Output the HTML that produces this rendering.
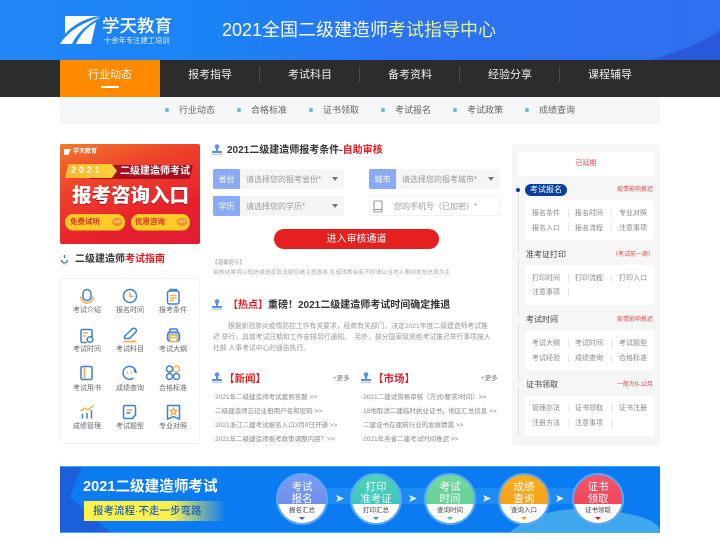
<!DOCTYPE html>
<html lang="zh-CN"><head><meta charset="utf-8"><title>2021全国二级建造师考试指导中心</title>
<style>
*{margin:0;padding:0;box-sizing:border-box}
html,body{width:720px;height:540px;overflow:hidden;background:#fff}
body{position:relative;font-family:"Liberation Sans","Noto Sans CJK SC",sans-serif;filter:blur(.3px)}
.a{position:absolute}
.t{position:absolute;white-space:nowrap;line-height:0}
.c{transform:translateX(-50%)}
.r{transform:translateX(-100%)}
b{font-weight:700}
.nav{color:#eee;font-size:11px;margin-top:1px}
.sub{color:#666;font-size:9px}
.dot{position:absolute;width:4px;height:4px;border-radius:50%;background:#6fb3de}
.sep{position:absolute;width:1px;height:16px;top:66px;background:#4a4a4a}
.lab{font-size:7px;color:#666;margin-top:1px}
.lbl{position:absolute;width:27px;height:20px;background:#8aaaf8;color:#fff;font-size:8px;line-height:21px;text-align:center;border-radius:2px 0 0 2px}
.inp{position:absolute;width:104px;height:20px;background:#f5f5f5;color:#999;font-size:8px;line-height:21px;padding-left:6px;border-radius:0 2px 2px 0}
.inp i{position:absolute;right:6px;top:8px;border:3.5px solid transparent;border-top:4px solid #777;border-bottom:0}
.li{font-size:6.5px;color:#888;margin-top:1px}
.box{position:absolute;left:525px;width:129px;height:40px;background:#fff;border-radius:3px}
.it{font-size:7px;color:#888;margin-top:1px}
.vs{position:absolute;width:1px;height:8px;background:#e6e6e6}
.h3{font-size:8px;color:#444;left:526px}
.rd{font-size:6px;color:#e8474f;left:653px}
.nd{position:absolute;left:516px;width:4px;height:4px;border-radius:50%;background:#fff}
.ci{position:absolute;top:473px;width:52px;height:52px;border-radius:50%;overflow:hidden;border:2px solid #5aa8f6}
.ci u{position:absolute;left:0;right:0;bottom:0;height:19px;background:#fff;display:block}
.ci span{position:absolute;left:0;right:0;text-align:center;color:#fff;font-size:10.5px;line-height:12px;top:6px}
.ci em{position:absolute;left:0;right:0;text-align:center;color:#444;font-size:6.5px;font-style:normal;line-height:8px;bottom:8.5px}
.ci i{position:absolute;left:21px;bottom:3px;border:3px solid transparent;border-top:3.5px solid #333;border-bottom:0}
.ar{position:absolute;top:495px;width:8px;height:7px;background:#e8f2ff;clip-path:polygon(0 0,100% 50%,0 100%,25% 50%)}
.user{position:absolute;width:10px;height:11px}
</style></head><body>

<!-- header -->
<div class="a" style="left:0;top:0;width:720px;height:60px;background:linear-gradient(90deg,#2186f5 0,#1b83f6 30%,#2b72f2 55%,#2f6ff0 100%);overflow:hidden">
<svg class="a" style="left:620px;top:0" width="100" height="60" viewBox="0 0 100 60"><path fill="#2a58dc" d="M30 60C55 53 80 44 100 30V60Z"/></svg>
<svg class="a" style="left:60px;top:16px" width="42" height="29" viewBox="0 0 42 29"><path fill="#fff" d="M5 0H40C27 2 15 7 5 18ZM0 28C7 17 20 7 41 1 27 8 17 17 12 28ZM16 28C20 19 27 11 36 6L31 28Z"/></svg>
<div class="t" style="left:102px;top:26px;font-size:17.5px;font-weight:500;color:#fff">学天教育</div>
<div class="t" style="left:104px;top:41px;font-size:7.3px;color:#e4f0ff">十余年专注建工培训</div>
<div class="t" style="left:222px;top:30px;font-size:18px;color:#fff">2021全国二级建造师<span style="color:#e2f48a">考试指导中心</span></div>
</div>

<!-- nav -->
<div class="a" style="left:0;top:60px;width:720px;height:37px;background:#2c2c2c"></div>
<div class="a" style="left:60px;top:60px;width:100px;height:37px;background:#ff8a00"></div>
<div class="a" style="left:101px;top:86px;width:18px;height:2px;background:#fff"></div>
<div class="t nav c" style="left:110px;top:74px;color:#fff">行业动态</div>
<div class="t nav c" style="left:210px;top:74px">报考指导</div>
<div class="t nav c" style="left:310px;top:74px">考试科目</div>
<div class="t nav c" style="left:410px;top:74px">备考资料</div>
<div class="t nav c" style="left:510px;top:74px">经验分享</div>
<div class="t nav c" style="left:610px;top:74px">课程辅导</div>
<div class="sep" style="left:259px"></div><div class="sep" style="left:359px"></div><div class="sep" style="left:459px"></div><div class="sep" style="left:559px"></div>

<!-- subnav -->
<div class="a" style="left:60px;top:97px;width:600px;height:27px;background:#f5f6f7"></div>
<div class="dot" style="left:165px;top:108px"></div><div class="t sub" style="left:179px;top:110px">行业动态</div>
<div class="dot" style="left:237px;top:108px"></div><div class="t sub" style="left:251px;top:110px">合格标准</div>
<div class="dot" style="left:309px;top:108px"></div><div class="t sub" style="left:323px;top:110px">证书领取</div>
<div class="dot" style="left:381px;top:108px"></div><div class="t sub" style="left:395px;top:110px">考试报名</div>
<div class="dot" style="left:453px;top:108px"></div><div class="t sub" style="left:467px;top:110px">考试政策</div>
<div class="dot" style="left:525px;top:108px"></div><div class="t sub" style="left:539px;top:110px">成绩查询</div>

<!-- red banner -->
<div class="a" style="left:60px;top:144px;width:140px;height:100px;border-radius:2px;overflow:hidden;background:linear-gradient(160deg,#f27a2a 0,#ee452b 30%,#e8202c 70%,#e01b35 100%)">
<div class="a" style="left:4px;top:5px;width:7px;height:6px;background:#fff;clip-path:polygon(0 0,100% 0,60% 100%,0 100%)"></div>
<div class="t" style="left:13px;top:8px;font-size:6px;color:#fff;font-weight:700">学天教育</div>
<div class="a" style="left:30px;top:21px;width:103px;height:14px;background:#a9101f;clip-path:polygon(0 0,100% 0,97% 100%,0 100%)"></div>
<div class="a" style="left:5px;top:20px;width:52px;height:14px;background:linear-gradient(90deg,#ffb52e,#ffd23c);clip-path:polygon(6% 0,90% 0,100% 50%,90% 100%,0 100%)"></div>
<div class="t" style="left:11px;top:27px;font-size:9.5px;letter-spacing:2.5px;color:#fff;font-weight:700">2021</div>
<div class="t" style="left:60px;top:28px;font-size:10px;color:#fff;font-weight:700">二级建造师考试</div>
<div class="t" style="left:12px;top:52px;font-size:19.5px;color:#fff;font-weight:900;text-shadow:0 1px 0 #a9101f">报考咨询入口</div>
<div class="a" style="left:5px;top:70px;width:60px;height:16px;border-radius:8px;background:#ffc928;box-shadow:0 1px 0 #d8861a"></div>
<div class="a" style="left:71px;top:70px;width:59px;height:16px;border-radius:8px;background:#ffc928;box-shadow:0 1px 0 #d8861a"></div>
<div class="t" style="left:10px;top:78px;font-size:7.5px;color:#d8331f;font-weight:700">免费试听</div>
<div class="t" style="left:75px;top:78px;font-size:7.5px;color:#d8331f;font-weight:700">优惠咨询</div>
<div class="a" style="left:52px;top:74px;width:10px;height:8px;border-radius:4px;background:#f3931f;color:#fff;font-size:4.5px;line-height:8px;text-align:center">GO</div>
<div class="a" style="left:117px;top:74px;width:10px;height:8px;border-radius:4px;background:#f3931f;color:#fff;font-size:4.5px;line-height:8px;text-align:center">GO</div>
</div>

<!-- guide title -->
<svg class="a" style="left:60px;top:254px" width="9" height="11" viewBox="0 0 9 11"><path fill="none" stroke="#3d86d9" stroke-width="1.400" d="M4.500 1 4.500 4M1.500 6A3 3 0 1 0 7.500 6"/><path fill="#f0b34a" d="M3 9h3v1.500H3z"/></svg>
<div class="t" style="left:75px;top:259.500px;font-size:10px;font-weight:700;color:#333">二级建造师<span style="color:#e21b23">考试指南</span></div>

<!-- icon grid -->
<div class="a" style="left:60px;top:278px;width:140px;height:166px;border:1px solid #f3f3f3"></div>
<svg class="a" style="left:60px;top:278px" width="140" height="166" viewBox="60 278 140 166" fill="none" stroke-width="1.500" stroke="#3d7fd0">
<!-- mic -->
<rect x="83" y="289.500" width="8" height="11" rx="4"/><path stroke="#f0b34a" stroke-width="1.700" d="M80.500 296.500c1 4.500 3.500 6.500 6.500 6.500s5.500-2 6.500-6.500"/>
<!-- clock -->
<circle cx="130" cy="296" r="6.500"/><path stroke="#e9a53a" d="M130 292.500V296.500H133.500"/>
<!-- doc -->
<rect x="167.500" y="291" width="11.500" height="13" rx="2"/><path stroke="#f0b34a" d="M170 295.500h6.500M170 298h6.500M170 300.500h4"/><path d="M170 291v-1.500h6.500v1.500"/>
<!-- exam time -->
<path d="M92 338v-7a1.500 1.500 0 0 0-1.500-1.500h-8a1.500 1.500 0 0 0-1.500 1.500v10a1.500 1.500 0 0 0 1.500 1.500H87"/><path stroke="#f0b34a" d="M83 333h5M83 336h3"/><circle cx="90" cy="339.500" r="2.800"/>
<!-- pencil -->
<path d="M124.500 336.500l7.500-7.500c1-1 2.700-1 3.700 0s.8 2.200 0 3.200l-6.200 6.300h-5z"/><path stroke="#f0b34a" stroke-width="1.800" d="M123.500 341.500h13"/>
<!-- printer -->
<rect x="167.500" y="332" width="12" height="9.500" rx="3" fill="#a6c7ef"/><path d="M169.500 332v-1.500a1.500 1.500 0 0 1 1.500-1.500h5a1.500 1.500 0 0 1 1.500 1.500V332"/><rect x="170" y="335" width="7" height="6.500" fill="#fff" stroke="#f0b34a"/><path stroke="#f0b34a" d="M171 337.500h5"/>
<!-- book -->
<rect x="81" y="366.500" width="11" height="13" rx="1.500"/><path stroke="#f0b34a" stroke-width="1.800" d="M84.500 367v12"/>
<!-- chat -->
<path d="M136 373a6.500 6.500 0 1 0-2.500 5"/><path d="M134 370l2 3"/><path stroke="#f0b34a" stroke-width="1.900" d="M126.500 372.500h1.400M131 372.500h1.400"/>
<!-- four circles -->
<circle cx="169.500" cy="369" r="3"/><circle cx="176.500" cy="369" r="3" stroke="#f0b34a"/><circle cx="169.500" cy="376.500" r="3"/><circle cx="176.500" cy="376.500" r="3"/>
<!-- chart -->
<path stroke="#f0b34a" d="M80.500 411l4.500-3 3 2 5.500-4.500"/><path d="M82.500 418.500v-4.500M87 418.500v-5.500M91.500 418.500v-8.500"/>
<!-- question doc -->
<path d="M125 405.500h9a1.500 1.500 0 0 1 1.500 1.500V415l-3 3.500h-7.500a1.500 1.500 0 0 1-1.500-1.500v-10A1.500 1.500 0 0 1 125 405.500z"/><path stroke="#f0b34a" stroke-width="1.600" d="M126.500 410h6"/><path d="M126.500 413h4"/>
<!-- badge -->
<path d="M167.500 405.500h12v13.500l-6-2.300-6 2.300z"/><path stroke="#f0b34a" d="M173.500 408l1 2.300 2.300.2-1.700 1.600.5 2.400-2.100-1.200-2.100 1.200.5-2.400-1.700-1.600 2.300-.2z"/>
</svg>
<div class="t lab c" style="left:87px;top:310px">考试介绍</div><div class="t lab c" style="left:130px;top:310px">报名时间</div><div class="t lab c" style="left:173px;top:310px">报考条件</div>
<div class="t lab c" style="left:87px;top:349px">考试时间</div><div class="t lab c" style="left:130px;top:349px">考试科目</div><div class="t lab c" style="left:173px;top:349px">考试大纲</div>
<div class="t lab c" style="left:87px;top:387.500px">考试用书</div><div class="t lab c" style="left:130px;top:387.500px">成绩查询</div><div class="t lab c" style="left:173px;top:387.500px">合格标准</div>
<div class="t lab c" style="left:87px;top:426px">成绩管理</div><div class="t lab c" style="left:130px;top:426px">考试题型</div><div class="t lab c" style="left:173px;top:426px">专业对照</div>

<!-- form -->
<svg class="user" style="left:212px;top:144px" viewBox="0 0 10 11"><circle cx="5" cy="2.500" r="2.300" fill="#5b8ff0"/><path fill="#5b8ff0" d="M4 4h2v3h4v2H0V7h4z"/><path fill="#b3c9f5" d="M0 9.700h10V11H0z"/></svg>
<div class="t" style="left:227px;top:151px;font-size:10px;font-weight:700;color:#333">2021二级建造师报考条件-<span style="color:#e21b23">自助审核</span></div>
<div class="lbl" style="left:213px;top:169px">省份</div><div class="inp" style="left:240px;top:169px">请选择您的报考省份*<i></i></div>
<div class="lbl" style="left:369px;top:169px">城市</div><div class="inp" style="left:396px;top:169px">请选择您的报考城市*<i></i></div>
<div class="lbl" style="left:213px;top:196px">学历</div><div class="inp" style="left:240px;top:196px">请选择您的学历*<i></i></div>
<div class="a" style="left:369px;top:196px;width:131px;height:20px;border:1px solid #f1f1f1;border-radius:2px;font-size:8px;color:#999;line-height:19px;padding-left:24px">您的手机号（已加密）*</div>
<svg class="a" style="left:373px;top:200px" width="10" height="13" viewBox="0 0 10 13" fill="none" stroke="#999" stroke-width="1.100"><rect x="1" y="1" width="8" height="11" rx="1"/><path d="M1 9.500h8"/></svg>
<div class="a" style="left:274px;top:229px;width:165px;height:20px;border-radius:10px;background:#e61f1f;color:#fff;font-size:10px;line-height:21px;text-align:center">进入审核通道</div>
<div class="t" style="left:212px;top:262.500px;font-size:5.500px;color:#999">【温馨提示】</div>
<div class="t" style="left:213px;top:273px;font-size:5.750px;color:#aaa">审核结果将以短信或语音发送给您请注意查收,各省政策会有不同请以当地人事网发布信息为主</div>

<!-- hot -->
<svg class="user" style="left:212px;top:299px" viewBox="0 0 10 11"><circle cx="5" cy="2.500" r="2.300" fill="#5b8ff0"/><path fill="#5b8ff0" d="M4 4h2v3h4v2H0V7h4z"/><path fill="#b3c9f5" d="M0 9.700h10V11H0z"/></svg>
<div class="t" style="left:228px;top:306px;font-size:10px;font-weight:700;color:#333"><span style="color:#e21b23">【热点】</span>重磅！2021二级建造师考试时间确定推退</div>
<div class="t" style="left:228px;top:327px;font-size:6.800px;color:#999">根据新冠肺炎疫情防控工作有关要求，经商有关部门，决定2021年度二级建造师考试推</div>
<div class="t" style="left:213px;top:338px;font-size:6.800px;color:#999">迟 举行，具体考试日期和工作安排另行通知。 &nbsp;另外，部分国家级资格考试推迟举行事项按人</div>
<div class="t" style="left:213px;top:349px;font-size:6.800px;color:#999">社部 人事考试中心的通告执行。</div>

<!-- news -->
<svg class="user" style="left:212px;top:372px" viewBox="0 0 10 11"><circle cx="5" cy="2.500" r="2.300" fill="#5b8ff0"/><path fill="#5b8ff0" d="M4 4h2v3h4v2H0V7h4z"/><path fill="#b3c9f5" d="M0 9.700h10V11H0z"/></svg>
<div class="t" style="left:224px;top:378.500px;font-size:10.500px;font-weight:700;color:#d8232a">【新闻】</div>
<div class="t" style="left:333px;top:379px;font-size:6.500px;color:#777">+更多</div>
<svg class="user" style="left:361px;top:372px" viewBox="0 0 10 11"><circle cx="5" cy="2.500" r="2.300" fill="#5b8ff0"/><path fill="#5b8ff0" d="M4 4h2v3h4v2H0V7h4z"/><path fill="#b3c9f5" d="M0 9.700h10V11H0z"/></svg>
<div class="t" style="left:373px;top:378.500px;font-size:10.500px;font-weight:700;color:#d8232a">【市场】</div>
<div class="t" style="left:481px;top:379px;font-size:6.500px;color:#777">+更多</div>
<div class="t li" style="left:213px;top:397px">·2021年二级建造师考试案例答题 &gt;&gt;</div>
<div class="t li" style="left:213px;top:411px">·二级建造师忘记注册用户名和密码 &gt;&gt;</div>
<div class="t li" style="left:213px;top:425px">·2021浙江二建考试报名入口3月9日开通 &gt;&gt;</div>
<div class="t li" style="left:213px;top:439px">·2021年二级建造师报考政策调整内容？&gt;&gt;</div>
<div class="t li" style="left:361px;top:397px">·2021二建试资格审核（方式/要求/时间）&gt;&gt;</div>
<div class="t li" style="left:361px;top:411px">·18地取消二建临时执业证书，地区汇总信息 &gt;&gt;</div>
<div class="t li" style="left:361px;top:425px">·二建证书在建筑行业的发展情景 &gt;&gt;</div>
<div class="t li" style="left:361px;top:439px">·2021年各省二建考试时间推迟 &gt;&gt;</div>

<!-- right panel -->
<div class="a" style="left:512px;top:144px;width:148px;height:302px;background:#f6f6f6;border-radius:2px"></div>
<div class="a" style="left:518px;top:152px;width:136px;height:24px;background:#fff;border-radius:2px"></div>
<div class="t c" style="left:586px;top:164px;font-size:7px;color:#e8474f">已延期</div>
<div class="a" style="left:517.500px;top:186px;width:1px;height:250px;background:#e3e3e3"></div>
<div class="a" style="left:516px;top:188px;width:4px;height:4px;border-radius:50%;background:#0a3f9a"></div>
<div class="a" style="left:525px;top:184px;width:42px;height:12px;border-radius:6px;background:#0a3f9a;color:#fff;font-size:8px;line-height:12px;text-align:center">考试报名</div>
<div class="t rd r" style="top:190px">疫情影响推迟</div>
<div class="box" style="top:200px"></div>
<div class="t it" style="left:532px;top:213px">报名条件</div><div class="t it" style="left:575px;top:213px">报名时间</div><div class="t it" style="left:619px;top:213px">专业对照</div>
<div class="t it" style="left:532px;top:227.500px">报名入口</div><div class="t it" style="left:575px;top:227.500px">报名流程</div><div class="t it" style="left:619px;top:227.500px">注意事项</div>
<div class="vs" style="left:568px;top:209px"></div><div class="vs" style="left:611px;top:209px"></div><div class="vs" style="left:568px;top:223px"></div><div class="vs" style="left:611px;top:223px"></div>

<div class="nd" style="top:253px"></div>
<div class="t h3" style="top:255px">准考证打印</div>
<div class="t rd r" style="top:255px;left:654px">（考试前一周）</div>
<div class="box" style="top:265px"></div>
<div class="t it" style="left:532px;top:277.500px">打印时间</div><div class="t it" style="left:575px;top:277.500px">打印流程</div><div class="t it" style="left:619px;top:277.500px">打印入口</div>
<div class="t it" style="left:532px;top:292px">注意事项</div>
<div class="vs" style="left:568px;top:274px"></div><div class="vs" style="left:611px;top:274px"></div><div class="vs" style="left:568px;top:288px"></div>

<div class="nd" style="top:318px"></div>
<div class="t h3" style="top:320px">考试时间</div>
<div class="t rd r" style="top:320px">疫情影响推迟</div>
<div class="box" style="top:330px"></div>
<div class="t it" style="left:532px;top:342.500px">考试大纲</div><div class="t it" style="left:575px;top:342.500px">考试时间</div><div class="t it" style="left:619px;top:342.500px">考试题型</div>
<div class="t it" style="left:532px;top:357.500px">考试经验</div><div class="t it" style="left:575px;top:357.500px">成绩查询</div><div class="t it" style="left:619px;top:357.500px">合格标准</div>
<div class="vs" style="left:568px;top:339px"></div><div class="vs" style="left:611px;top:339px"></div><div class="vs" style="left:568px;top:354px"></div><div class="vs" style="left:611px;top:354px"></div>

<div class="nd" style="top:383px"></div>
<div class="t h3" style="top:385px">证书领取</div>
<div class="t rd r" style="top:385px">一般为9-12月</div>
<div class="box" style="top:396px"></div>
<div class="t it" style="left:532px;top:408px">管理办法</div><div class="t it" style="left:575px;top:408px">证书领取</div><div class="t it" style="left:619px;top:408px">证书注册</div>
<div class="t it" style="left:532px;top:423px">注册方法</div><div class="t it" style="left:575px;top:423px">注意事项</div>
<div class="vs" style="left:568px;top:404px"></div><div class="vs" style="left:611px;top:404px"></div><div class="vs" style="left:568px;top:419px"></div><div class="vs" style="left:611px;top:419px"></div>

<!-- bottom banner -->
<div class="a" style="left:60px;top:466px;width:600px;height:67px;overflow:hidden;background:#0b7bf2;border-top:1px solid #4aa6f7;border-bottom:1px solid #4aa6f7">
<svg class="a" style="left:0;top:0" width="600" height="65" viewBox="0 0 600 65">
<path fill="#1a60dc" d="M0 0H22L10 30 50 65H0Z"/>
<path fill="#3fa7ee" d="M450 65C470 48 500 40 530 42S600 50 600 65Z"/>
<path fill="#1c8cf4" d="M240 21H540V37H240Z"/>
</svg>
</div>
<div class="t" style="left:83px;top:487px;font-size:14.600px;font-weight:700;color:#fff">2021二级建造师考试</div>
<div class="a" style="left:84px;top:501px;width:142px;height:20px;background:linear-gradient(90deg,#fff34a 0,#f9f04e 62%,rgba(255,240,80,0) 100%)"></div>
<div class="t" style="left:93px;top:511px;font-size:10.500px;font-weight:500;color:#1c5fb8">报考流程·不走一步弯路</div>

<div class="ci" style="left:276px;background:linear-gradient(#7a9cf2,#6a84ec)"><span>考试<br>报名</span><u></u><em>报名汇总</em><i style="border-top-color:#3c63c8"></i></div>
<div class="ci" style="left:350px;background:linear-gradient(#50d2b4,#2fbfca)"><span>打印<br>准考证</span><u></u><em>打印汇总</em><i style="border-top-color:#27a99c"></i></div>
<div class="ci" style="left:424px;background:linear-gradient(#74d8a0,#5ccb90)"><span>考试<br>时间</span><u></u><em>查询时间</em><i style="border-top-color:#52c79b"></i></div>
<div class="ci" style="left:498px;background:linear-gradient(#f9ad1e,#f69a18)"><span>成绩<br>查询</span><u></u><em>查询入口</em><i style="border-top-color:#ef9a1a"></i></div>
<div class="ci" style="left:572px;background:linear-gradient(#f2566a,#ee3b50)"><span>证书<br>领取</span><u></u><em>证书领取</em><i style="border-top-color:#d9202f"></i></div>
<div class="ar" style="left:336px"></div><div class="ar" style="left:409px"></div><div class="ar" style="left:483px"></div><div class="ar" style="left:556px"></div>
</body></html>
